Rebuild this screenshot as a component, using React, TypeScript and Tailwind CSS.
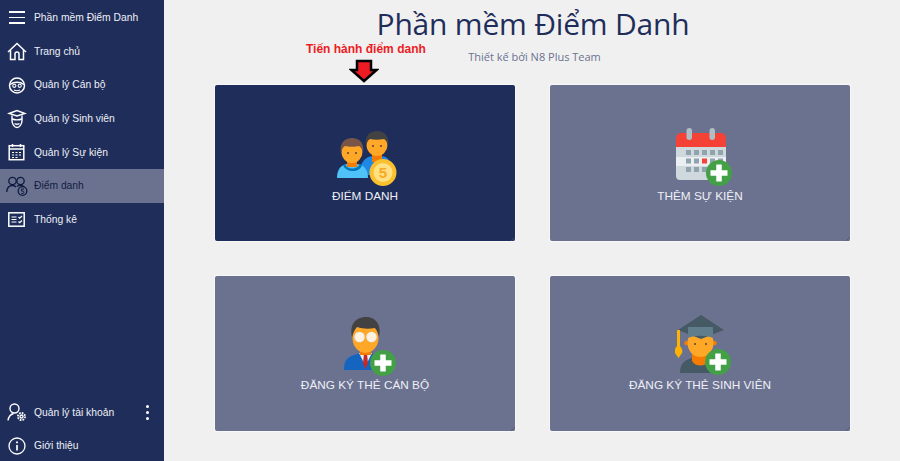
import type { ReactNode } from 'react';

const NAV_TOP = [
  { label: 'Trang chủ', icon: <HomeIcon /> },
  { label: 'Quản lý Cán bộ', icon: <OfficerIcon /> },
  { label: 'Quản lý Sinh viên', icon: <StudentIcon /> },
  { label: 'Quản lý Sự kiện', icon: <CalendarLineIcon /> },
  { label: 'Điểm danh', icon: <AttendanceIcon />, active: true },
  { label: 'Thống kê', icon: <StatsIcon /> },
];

function HomeIcon() {
  return (
    <svg width="20" height="19" viewBox="0 0 20 19" fill="none" stroke="currentColor" strokeWidth="1.500">
      <path d="M1 10 10 1.500l9 8.500" />
      <path d="M3.500 8v9.500h4.500v-5.500a2 2 0 0 1 4 0v5.500h4.500V8" />
    </svg>
  );
}

function OfficerIcon() {
  return (
    <svg width="18" height="19" viewBox="0 0 18 19" fill="none" stroke="currentColor" strokeWidth="1.500">
      <circle cx="9" cy="9.500" r="7.500" />
      <path d="M2 8.500c4-3 10-3 14 0" />
      <circle cx="6.300" cy="9.800" r="1.600" strokeWidth="1.100" />
      <circle cx="11.700" cy="9.800" r="1.600" strokeWidth="1.100" />
      <path d="M6 14c2 1 4 1 6 0" strokeWidth="1.100" />
    </svg>
  );
}

function StudentIcon() {
  return (
    <svg width="20" height="20" viewBox="0 0 20 20" fill="none" stroke="currentColor" strokeWidth="1.400">
      <path d="M2 4.500 10 1.500l8 3-8 2.500-8-2.500Z" />
      <path d="M5 6.500v5c0 3.500 2.500 7 5 7s5-3.500 5-7v-5" />
      <path d="M5 10c3 1 7 1 10 0M7.500 14.500c1.500 1 3.500 1 5 0" />
    </svg>
  );
}

function CalendarLineIcon() {
  return (
    <svg width="17" height="18" viewBox="0 0 17 18" fill="none" stroke="currentColor" strokeWidth="1.500">
      <rect x="1.200" y="2.700" width="14.600" height="14" />
      <path d="M1.200 6h14.600M4.500 1v3M12.500 1v3" />
      <path d="M4 9.500h2M7.500 9.500h2M11 9.500h2M4 12h2M7.500 12h2M11 12h2M4 14.500h2M7.500 14.500h2" strokeWidth="1.200" />
    </svg>
  );
}

function AttendanceIcon() {
  return (
    <svg width="22" height="20" viewBox="0 0 22 20" fill="none" stroke="currentColor" strokeWidth="1.300">
      <circle cx="6.500" cy="5" r="3.700" />
      <path d="M.7 16c.3-4 2.500-6.500 5.800-6.500 1.500 0 2.700.5 3.500 1.500" />
      <circle cx="14.500" cy="5" r="3.700" />
      <path d="M11 10.500c2-1.500 5.500-1.500 7 .5" />
      <circle cx="16.500" cy="15" r="4.300" fill="#6b7290" />
      <path d="M18 13h-2.500l-.2 2h1.500c1.500 0 1.500 2.500 0 2.500h-1.500" strokeWidth="1" />
    </svg>
  );
}

function StatsIcon() {
  return (
    <svg width="17" height="15" viewBox="0 0 17 15" fill="none" stroke="currentColor" strokeWidth="1.500">
      <rect x=".8" y=".8" width="15.400" height="13.400" />
      <path d="M3.500 5h5M3.500 7.500h5M3.500 10h5M10.500 5l1.200 1.200L14 4M10.500 9.500l1.200 1.200L14 8.500" strokeWidth="1.200" />
    </svg>
  );
}

function AccountIcon() {
  return (
    <svg width="20" height="19" viewBox="0 0 20 19" fill="none" stroke="currentColor" strokeWidth="1.400">
      <circle cx="7.500" cy="5.500" r="4.500" />
      <path d="M1 17.500c.5-3.500 2.500-6 5.500-7" />
      <circle cx="14.500" cy="13.500" r="1.500" />
      <circle cx="14.500" cy="13.500" r="3.600" strokeWidth="1.800" strokeDasharray="1.700 1.100" />
    </svg>
  );
}

function InfoIcon() {
  return (
    <svg width="18" height="18" viewBox="0 0 18 18" fill="none" stroke="currentColor" strokeWidth="1.300">
      <circle cx="9" cy="9" r="8" />
      <path d="M9 8v5.500" strokeWidth="1.700" />
      <path d="M9 4.500v1.800" strokeWidth="1.800" />
    </svg>
  );
}

function PlusBadge({ cx, cy }: { cx: number; cy: number }) {
  return (
    <g>
      <circle cx={cx} cy={cy} r="13" fill="#43a047" />
      <path d={`M${cx} ${cy - 8.500}v17M${cx - 8.500} ${cy}h17`} stroke="#fff" strokeWidth="5.500" />
    </g>
  );
}

function PeopleCoin() {
  return (
    <svg width="60" height="55" viewBox="0 0 60 55">
      <path d="M24 34c3-6 7-9 13-9h6c6 0 10 3 12 11v8H24Z" fill="#1e88e5" />
      <rect x="35" y="18" width="10" height="13" fill="#f57c00" />
      <ellipse cx="40" cy="14" rx="10.500" ry="11" fill="#ffa726" />
      <path d="M29 15C27 5 33 0 40 0s13 5 11 15c-1-4-2-6-4-7-5 1-10 1-14 0-2 1-3 3-4 7Z" fill="#424242" />
      <circle cx="36" cy="15" r="1" fill="#5d4037" />
      <circle cx="44" cy="15" r="1" fill="#5d4037" />
      <path d="M0 47c0-9 4-13 10-14h10c7 1 11 5 11 14Z" fill="#4fc3f7" />
      <path d="M8 33c2 6 12 6 15 0l2 1c-2 8-16 8-19 0Z" fill="#0277bd" />
      <rect x="10" y="25" width="10" height="11" fill="#f57c00" />
      <ellipse cx="15" cy="21" rx="10.500" ry="11" fill="#ffa726" />
      <path d="M4 22C2 12 8 7 15 7s13 5 11 15c-1-4-2-6-4-7-4 1-10 1-14 0-2 1-3 3-4 7Z" fill="#795548" />
      <circle cx="11" cy="22" r="1" fill="#5d4037" />
      <circle cx="19" cy="22" r="1" fill="#5d4037" />
      <circle cx="46" cy="41.500" r="13.500" fill="#fbc02d" />
      <circle cx="46" cy="41.500" r="9.500" fill="#ffe082" />
      <text x="46" y="47" textAnchor="middle" fontSize="15" fontWeight="700" fill="#f9a825" fontFamily="Liberation Sans, sans-serif">5</text>
    </svg>
  );
}

function CalendarAdd() {
  return (
    <svg width="57" height="58" viewBox="0 0 57 58">
      <path d="M0 10a5 5 0 0 1 5-5h40a5 5 0 0 1 5 5v9H0Z" fill="#f44336" />
      <path d="M0 19h50v29a4 4 0 0 1-4 4H4a4 4 0 0 1-4-4Z" fill="#cfd8dc" />
      <rect y="29" width="50" height="9" fill="#eceff1" />
      <rect x="10.500" y="0" width="5.500" height="12" rx="2.700" fill="#b0bec5" />
      <rect x="33.500" y="0" width="5.500" height="12" rx="2.700" fill="#b0bec5" />
      {[10, 18, 26, 34, 42].map((x) =>
        [22, 30.500, 39].map((y) => (
          <rect key={`${x}-${y}`} x={x} y={y} width="5" height="5" fill={x === 26 && y === 30.500 ? '#f44336' : '#90a4ae'} />
        )),
      )}
      <PlusBadge cx={43} cy={45} />
    </svg>
  );
}

function OfficerAdd() {
  return (
    <svg width="53" height="60" viewBox="0 0 53 60">
      <path d="M0 53c0-9 3-13 10-15l6-2h11l6 2c6 2 9 6 9 15Z" fill="#1565c0" />
      <path d="M15 36h13l-6.500 13Z" fill="#eceff1" />
      <path d="M20 37h3l1 9-2.500 6-2.500-6Z" fill="#c62828" />
      <rect x="16" y="30" width="11" height="8" fill="#f57c00" />
      <ellipse cx="21.500" cy="21" rx="13" ry="15" fill="#ffa726" />
      <path d="M8 20C5 6 13 0 22 0s16 7 13 20c-1-4-2-7-4-9-6 1-12 1-18-1-2 2-4 6-5 10Z" fill="#424242" />
      <circle cx="15.500" cy="20" r="4.500" fill="#fff3e0" stroke="#eceff1" strokeWidth="1.500" />
      <circle cx="27.500" cy="20" r="4.500" fill="#fff3e0" stroke="#eceff1" strokeWidth="1.500" />
      <PlusBadge cx={39} cy={46} />
    </svg>
  );
}

function StudentAdd() {
  return (
    <svg width="56" height="60" viewBox="0 0 56 60">
      <path d="M5 58c0-10 5-13 12-15h16c7 2 12 6 12 15Z" fill="#455a64" />
      <path d="M17 38h17v8c-3 6-14 6-17 0Z" fill="#f57c00" />
      <circle cx="11.500" cy="28" r="2.200" fill="#f57c00" />
      <circle cx="39.500" cy="28" r="2.200" fill="#f57c00" />
      <ellipse cx="25.500" cy="28" rx="13" ry="14" fill="#ffa726" />
      <circle cx="20" cy="29" r="1" fill="#5d4037" />
      <circle cx="31" cy="29" r="1" fill="#5d4037" />
      <path d="M3 15 26 0l23 15-23 9Z" fill="#455a64" />
      <path d="M13 12h25v11c-7-3-18-3-25 0Z" fill="#607d8b" />
      <rect x="2" y="15" width="3" height="17" fill="#ffb300" />
      <path d="M3.500 30c3 2 4.500 5 3.500 8l-3.500 5-3.500-5c-1-3 .5-6 3.500-8Z" fill="#ffb300" />
      <PlusBadge cx={43} cy={47} />
    </svg>
  );
}

function NavRow({ icon, label, active, trailing }: { icon: ReactNode; label: string; active?: boolean; trailing?: ReactNode }) {
  return (
    <div className={`flex h-[33.700px] items-center ${active ? 'bg-[#6b7290] text-[#111c42]' : 'text-[#eef0f6]'}`}>
      <span className={`flex w-[33px] shrink-0 justify-center ${active ? 'text-[#0e1a3f]' : 'text-white'}`}>{icon}</span>
      <span className="ml-px flex-1 text-[10.300px]">{label}</span>
      {trailing}
    </div>
  );
}

function Card({ icon, label, active, className }: { icon: ReactNode; label: string; active?: boolean; className: string }) {
  return (
    <div
      className={`relative flex h-[155.500px] flex-col items-center rounded-[2px] text-[11.800px] leading-[14px] text-[#eef0f6] shadow-[0_0_0_1px_#f7f7f7] ${
        active ? 'bg-[#1f2d5a]' : 'bg-[#6b7290]'
      } ${className}`}
    >
      {icon}
      <span>{label}</span>
      {/* the little resize grip in the corner */}
      <svg className="absolute right-0 bottom-0" width="5" height="5" viewBox="0 0 5 5" stroke="#4a5069" strokeWidth="0.700">
        <path d="M5 1 1 5M5 3.500 3.500 5" />
      </svg>
    </div>
  );
}

export default function App() {
  return (
    <div className="flex h-[461px] w-[900px] overflow-hidden bg-[#f0f0f0] font-['Liberation_Sans',sans-serif]">
      <aside className="flex w-[164px] shrink-0 flex-col bg-[#1f2d5a]">
        <div className="flex h-[34.500px] shrink-0 items-center text-[#eef0f6]">
          <span className="flex w-[33px] shrink-0 justify-center">
            <span className="flex w-[16px] flex-col gap-[4px]">
              <span className="h-[1.500px] bg-white" />
              <span className="h-[1.500px] bg-white" />
              <span className="h-[1.500px] bg-white" />
            </span>
          </span>
          <span className="ml-px text-[10.300px]">Phần mềm Điểm Danh</span>
        </div>
        {NAV_TOP.map((item) => (
          <NavRow key={item.label} icon={item.icon} label={item.label} active={item.active} />
        ))}
        <div className="mt-auto -mb-[2px]">
          <NavRow
            icon={<AccountIcon />}
            label="Quản lý tài khoản"
            trailing={
              <span className="mr-[15px] flex flex-col gap-[3px]">
                <span className="h-[3px] w-[3px] rounded-full bg-white" />
                <span className="h-[3px] w-[3px] rounded-full bg-white" />
                <span className="h-[3px] w-[3px] rounded-full bg-white" />
              </span>
            }
          />
          <NavRow icon={<InfoIcon />} label="Giới thiệu" />
        </div>
      </aside>
      <main className="relative flex-1 pl-[51px]">
        <h1 className="-ml-[49px] pt-[2px] text-center font-['Open_Sans',sans-serif] text-[30px] leading-[44px] tracking-[-0.2px] text-[#1f2d5a]">
          Phần mềm Điểm Danh
        </h1>
        <p className="-ml-[46px] pt-[2px] text-center font-['Open_Sans',sans-serif] text-[11px] leading-[17px] text-[#6b7290]">
          Thiết kế bởi N8 Plus Team
        </p>
        <div className="mt-[20px] grid grid-cols-[300px_300px] gap-x-[35px] gap-y-[35px]">
          <Card className="gap-[3px] pt-[46px]" icon={<span className="ml-[4px]"><PeopleCoin /></span>} label="ĐIỂM DANH" active />
          <Card className="gap-[3px] pt-[43px]" icon={<span className="ml-[8px]"><CalendarAdd /></span>} label="THÊM SỰ KIỆN" />
          <Card className="pt-[41px] gap-[1px]" icon={<span className="ml-[11px]"><OfficerAdd /></span>} label="ĐĂNG KÝ THẺ CÁN BỘ" />
          <Card className="gap-[3px] pt-[39px]" icon={<span className="ml-[6px]"><StudentAdd /></span>} label="ĐĂNG KÝ THẺ SINH VIÊN" />
        </div>
        <span className="absolute top-[40px] left-[142px] text-[12px] font-bold text-[#ed1c24]">Tiến hành điểm danh</span>
        <svg className="absolute top-[59px] left-[185px]" width="30" height="24" viewBox="0 0 30 24">
          <path d="M8 2h14v9h5.500L15 22 2.500 11H8Z" fill="#ed1c24" stroke="#000" strokeWidth="2.500" />
        </svg>
      </main>
    </div>
  );
}
